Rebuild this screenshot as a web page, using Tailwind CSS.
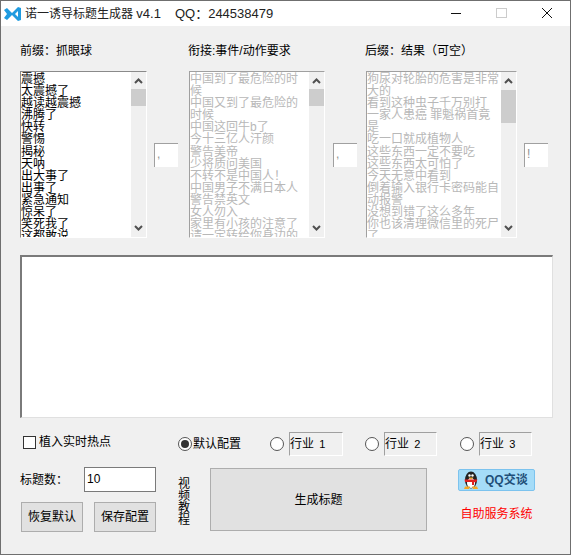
<!DOCTYPE html>
<html lang="zh">
<head>
<meta charset="UTF-8">
<title>诺一诱导标题生成器</title>
<script src="https://cdn.jsdelivr.net/npm/@tailwindcss/browser@4"></script>
</head>
<body class="bg-[#f0f0f0] font-['Liberation_Sans','Noto_Sans_CJK_SC',sans-serif] text-[12px] text-black">
<div class="w-[571px] h-[555px] overflow-hidden border-x border-b border-t border-[#6f6f6f] flex flex-col">

  <!-- title bar -->
  <div class="h-[25px] bg-white flex items-center shrink-0">
    <svg class="ml-[3px] w-[17px] h-[14px]" viewBox="0 0 17 14">
      <path d="M0 3 L3 1 L8 6 L14 0 L17 1 V13 L14 14 L8 8 L3 13 L0 11 L3 7Z" fill="#1f9be0"/>
      <path d="M11 7 L14 4 V10Z" fill="#fff"/>
    </svg>
    <span class="ml-[4px] text-[#222]">诺一诱导标题生成器 <span class="text-[13px]">v4.1</span></span>
    <span class="ml-[14px] text-[#222] text-[13px]">QQ：244538479</span>
    <div class="ml-auto flex items-center h-full">
      <svg class="w-[46px] h-[25px]" viewBox="0 0 46 25"><path d="M19 12.5H29" stroke="#111" fill="none"/></svg>
      <svg class="w-[46px] h-[25px]" viewBox="0 0 46 25"><rect x="18.5" y="7.5" width="10" height="9" stroke="#ccc" fill="none"/></svg>
      <svg class="w-[46px] h-[25px]" viewBox="0 0 46 25"><path d="M18 7L28 17M28 7L18 17" stroke="#111" fill="none"/></svg>
    </div>
  </div>

  <div class="flex-1 px-[19px] flex flex-col">
    <!-- column labels -->
    <div class="flex h-[45px] items-end pb-[11px] shrink-0">
      <span class="w-[168px]">前缀：抓眼球</span>
      <span class="w-[177px]">衔接:事件/动作要求</span>
      <span>后缀：结果（可空）</span>
    </div>

    <!-- three lists -->
    <div class="flex items-center h-[167px] shrink-0">
      <div class="w-[127px] h-full flex bg-white border-t border-l border-[#8a8a8a] border-r border-b border-r-white border-b-white overflow-hidden">
        <div class="flex-1 pt-[1px] leading-[12.1px] overflow-hidden whitespace-nowrap">
          <div>震撼</div><div>太震撼了</div><div>越读越震撼</div><div>沸腾了</div><div>快转</div><div>警惕</div><div>揭秘</div><div>天呐</div><div>出大事了</div><div>出事了</div><div>紧急通知</div><div>惊呆了</div><div>笑死我了</div><div>这都敢说</div>
        </div>
        <div class="w-[15px] bg-[#f0f0f0] flex flex-col justify-between items-center py-[6px] relative">
          <svg class="w-[9px] h-[6px]" viewBox="0 0 9 6"><path d="M1 5L4.5 1.5L8 5" stroke="#505050" stroke-width="2" fill="none"/></svg>
          <div class="absolute top-[17px] left-0 w-[15px] h-[17px] bg-[#cdcdcd]"></div>
          <svg class="w-[9px] h-[6px]" viewBox="0 0 9 6"><path d="M1 1L4.5 4.5L8 1" stroke="#505050" stroke-width="2" fill="none"/></svg>
        </div>
      </div>
      <div class="ml-[7px] w-[24px] h-[24px] bg-white border-t border-l border-[#a0a0a0] text-[#909090] pl-[2px] leading-[20px]">,</div>

      <div class="ml-[11px] w-[136px] h-full flex bg-white border-t border-l border-[#a0a0a0] border-r border-b border-r-white border-b-white overflow-hidden text-[#b8b8b8]">
        <div class="flex-1 pt-[1px] leading-[12.1px] overflow-hidden whitespace-nowrap">
          <div>中国到了最危险的时</div><div>候</div><div>中国又到了最危险的</div><div>时候</div><div>中国这回牛b了</div><div>今十三亿人汗颜</div><div>警告美帝</div><div>少将质问美国</div><div>不转不是中国人！</div><div>中国男子不满日本人</div><div>警告禁英文</div><div>女人勿入</div><div>家里有小孩的注意了</div><div>请一定转给你身边的</div>
        </div>
        <div class="w-[15px] bg-[#f0f0f0] flex flex-col justify-between items-center py-[6px] relative">
          <svg class="w-[9px] h-[6px]" viewBox="0 0 9 6"><path d="M1 5L4.5 1.5L8 5" stroke="#505050" stroke-width="2" fill="none"/></svg>
          <div class="absolute top-[17px] left-0 w-[15px] h-[17px] bg-[#cdcdcd]"></div>
          <svg class="w-[9px] h-[6px]" viewBox="0 0 9 6"><path d="M1 1L4.5 4.5L8 1" stroke="#505050" stroke-width="2" fill="none"/></svg>
        </div>
      </div>
      <div class="ml-[8px] w-[24px] h-[24px] bg-white border-t border-l border-[#a0a0a0] text-[#909090] pl-[2px] leading-[20px]">,</div>

      <div class="ml-[9px] w-[151px] h-full flex bg-white border-t border-l border-[#a0a0a0] border-r border-b border-r-white border-b-white overflow-hidden text-[#b8b8b8]">
        <div class="flex-1 pt-[1px] leading-[12.1px] overflow-hidden whitespace-nowrap">
          <div>狗尿对轮胎的危害是非常</div><div>大的</div><div>看到这种虫子千万别打</div><div>一家人患癌 罪魁祸首竟</div><div>是</div><div>吃一口就成植物人</div><div>这些东西一定不要吃</div><div>这些东西太可怕了</div><div>今天无意中看到</div><div>倒着输入银行卡密码能自</div><div>动报警</div><div>没想到错了这么多年</div><div>你也该清理微信里的死尸</div><div>了</div>
        </div>
        <div class="w-[15px] bg-[#f0f0f0] flex flex-col justify-between items-center py-[6px] relative">
          <svg class="w-[9px] h-[6px]" viewBox="0 0 9 6"><path d="M1 5L4.5 1.5L8 5" stroke="#505050" stroke-width="2" fill="none"/></svg>
          <div class="absolute top-[18px] left-0 w-[15px] h-[33px] bg-[#cdcdcd]"></div>
          <svg class="w-[9px] h-[6px]" viewBox="0 0 9 6"><path d="M1 1L4.5 4.5L8 1" stroke="#505050" stroke-width="2" fill="none"/></svg>
        </div>
      </div>
      <div class="ml-[7px] w-[24px] h-[24px] bg-white border-t border-l border-[#a0a0a0] text-[#909090] pl-[2px] leading-[20px]">!</div>
    </div>

    <!-- output box -->
    <div class="mt-[17px] w-[533px] h-[163px] bg-white border-t-2 border-l-2 border-t-[#7a7a7a] border-l-[#7a7a7a] border-r border-b border-r-[#e0e0e0] border-b-[#e0e0e0] shrink-0"></div>

    <!-- bottom controls -->
    <div class="flex mt-[14px]">
      <div class="w-[137px] shrink-0">
        <div class="flex items-center h-[20px] pl-[3px] gap-[3px]">
          <div class="w-[13px] h-[13px] bg-white border border-[#333]"></div>
          <span>植入实时热点</span>
        </div>
        <div class="flex items-center mt-[15px] h-[25px]">
          <span class="w-[64px]">标题数：</span>
          <div class="w-[72px] h-[25px] bg-white border border-[#7a7a7a] pl-[2px] leading-[23px]">10</div>
        </div>
        <div class="flex gap-[11px] mt-[10px] ml-[1px]">
          <div class="w-[62px] h-[30px] bg-[#e1e1e1] border border-[#adadad] flex items-center justify-center">恢复默认</div>
          <div class="w-[62px] h-[30px] bg-[#e1e1e1] border border-[#adadad] flex items-center justify-center">保存配置</div>
        </div>
      </div>

      <div class="ml-[21px] flex-1">
        <div class="flex items-center h-[24px]">
          <div class="w-[14px] h-[14px] rounded-full bg-white border border-[#555] flex items-center justify-center"><div class="w-[8px] h-[8px] rounded-full bg-[#333]"></div></div>
          <span class="ml-[1px] w-[77px]">默认配置</span>
          <div class="w-[14px] h-[14px] rounded-full bg-white border border-[#555]"></div>
          <div class="ml-[5px] w-[54px] h-[24px] border-t border-l border-[#a0a0a0] border-r border-b border-r-white border-b-white leading-[23px] whitespace-pre">行业 <span class="ml-[2px] text-[11px]">1</span></div>
          <div class="ml-[22px] w-[14px] h-[14px] rounded-full bg-white border border-[#555]"></div>
          <div class="ml-[5px] w-[53px] h-[24px] border-t border-l border-[#a0a0a0] border-r border-b border-r-white border-b-white leading-[23px] whitespace-pre">行业 <span class="ml-[2px] text-[11px]">2</span></div>
          <div class="ml-[23px] w-[14px] h-[14px] rounded-full bg-white border border-[#555]"></div>
          <div class="ml-[5px] w-[53px] h-[24px] border-t border-l border-[#a0a0a0] border-r border-b border-r-white border-b-white leading-[23px] whitespace-pre">行业 <span class="ml-[2px] text-[11px]">3</span></div>
        </div>
        <div class="flex mt-[12px]">
          <div class="w-[12px] mt-[10px] leading-[12px]">视<br>频<br>教<br>程</div>
          <div class="ml-[20px] w-[217px] h-[63px] bg-[#e1e1e1] border border-[#adadad] flex items-center justify-center">生成标题</div>
          <div class="ml-[31px] flex flex-col items-center">
            <div class="w-[77px] h-[22px] mt-[1px] rounded-[2px] bg-[#a5dcf8] border border-[#7cc3ee] flex items-center pl-[3px] gap-[5px] text-[#1f4f78] font-bold">
              <svg class="w-[18px] h-[18px]" viewBox="0 0 18 18">
                <ellipse cx="9" cy="9" rx="6" ry="8.5" fill="#222"/>
                <ellipse cx="9" cy="12" rx="4" ry="5" fill="#fff"/>
                <circle cx="7.5" cy="4.5" r="1.2" fill="#fff"/><circle cx="10.5" cy="4.5" r="1.2" fill="#fff"/>
                <path d="M6.5 6.5H11.5L9 8.5Z" fill="#f5a623"/>
                <path d="M2.5 8.5H15.5L14 11.5L12 11V14H10V11H5L3 11Z" fill="#e02020"/>
                <path d="M3 15.5H8L7 18H2ZM10 15.5H15L16 18H11Z" fill="#f5a623"/>
              </svg>
              <span>QQ交谈</span>
            </div>
            <div class="mt-[14px] text-[#ff0000]">自助服务系统</div>
          </div>
        </div>
      </div>
    </div>
  </div>
</div>
</body>
</html>
